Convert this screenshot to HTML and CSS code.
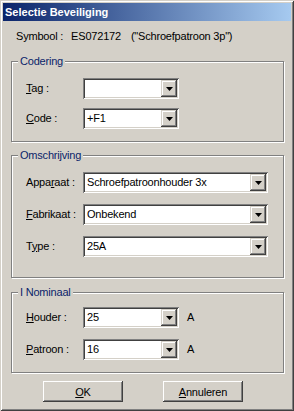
FILE: index.html
```html
<!DOCTYPE html>
<html lang="nl">
<head>
    <meta charset="UTF-8">
    <title>Selectie Beveiliging</title>
    <link rel="stylesheet" href="styles.css">
</head>
<body>
    <div class="window">
        <div class="titlebar">Selectie Beveiliging</div>
        <div class="client">
            <div class="symbol">
                <span>Symbool :</span>
                <span class="symbol-code">ES072172</span>
                <span class="symbol-desc">("Schroefpatroon 3p")</span>
            </div>

            <div class="group group-codering">
                <span class="legend">Codering</span>
                <div class="row">
                    <label><u>T</u>ag :</label>
                    <div class="combo combo-short">
                        <span class="value"></span>
                        <span class="drop"><svg width="7" height="4" viewBox="0 0 7 4"><polygon points="0,0 7,0 3.5,4" fill="#000"/></svg></span>
                    </div>
                </div>
                <div class="row">
                    <label><u>C</u>ode :</label>
                    <div class="combo combo-short">
                        <span class="value">+F1</span>
                        <span class="drop"><svg width="7" height="4" viewBox="0 0 7 4"><polygon points="0,0 7,0 3.5,4" fill="#000"/></svg></span>
                    </div>
                </div>
            </div>

            <div class="group group-omschrijving">
                <span class="legend">Omschrijving</span>
                <div class="row">
                    <label>Appa<u>r</u>aat :</label>
                    <div class="combo combo-long">
                        <span class="value">Schroefpatroonhouder 3x</span>
                        <span class="drop"><svg width="7" height="4" viewBox="0 0 7 4"><polygon points="0,0 7,0 3.5,4" fill="#000"/></svg></span>
                    </div>
                </div>
                <div class="row">
                    <label><u>F</u>abrikaat :</label>
                    <div class="combo combo-long">
                        <span class="value">Onbekend</span>
                        <span class="drop"><svg width="7" height="4" viewBox="0 0 7 4"><polygon points="0,0 7,0 3.5,4" fill="#000"/></svg></span>
                    </div>
                </div>
                <div class="row">
                    <label>T<u>y</u>pe :</label>
                    <div class="combo combo-long">
                        <span class="value">25A</span>
                        <span class="drop"><svg width="7" height="4" viewBox="0 0 7 4"><polygon points="0,0 7,0 3.5,4" fill="#000"/></svg></span>
                    </div>
                </div>
            </div>

            <div class="group group-nominaal">
                <span class="legend">I Nominaal</span>
                <div class="row">
                    <label><u>H</u>ouder :</label>
                    <div class="combo combo-short">
                        <span class="value">25</span>
                        <span class="drop"><svg width="7" height="4" viewBox="0 0 7 4"><polygon points="0,0 7,0 3.5,4" fill="#000"/></svg></span>
                    </div>
                    <span class="unit">A</span>
                </div>
                <div class="row">
                    <label><u>P</u>atroon :</label>
                    <div class="combo combo-short">
                        <span class="value">16</span>
                        <span class="drop"><svg width="7" height="4" viewBox="0 0 7 4"><polygon points="0,0 7,0 3.5,4" fill="#000"/></svg></span>
                    </div>
                    <span class="unit">A</span>
                </div>
            </div>

            <div class="buttons">
                <button type="button" class="btn"><u>O</u>K</button>
                <button type="button" class="btn"><u>A</u>nnuleren</button>
            </div>
        </div>
    </div>
</body>
</html>
```

FILE: styles.css
```css
body {
    margin: 0;
    font-family: "Liberation Sans", Arial, sans-serif;
    font-size: 11px;
    color: #000;
    background: #d4d0c8;
}

.window {
    box-sizing: border-box;
    width: 294px;
    height: 411px;
    padding: 3px;
    background: #d4d0c8;
    box-shadow: inset 1px 1px #d4d0c8, inset -1px -1px #404040, inset 2px 2px #fff, inset -2px -2px #808080;
}

.titlebar {
    height: 18px;
    line-height: 18px;
    padding-left: 2px;
    color: #fff;
    font-weight: bold;
    background: linear-gradient(to right, #0a246a, #a6caf0);
}

.client {
    display: flex;
    flex-direction: column;
    letter-spacing: -0.2px;
}

.symbol {
    margin: 9px 0 0 13px;
    line-height: 13px;
    display: flex;
}

.symbol-code {
    margin-left: 8px;
}

.symbol-desc {
    margin-left: 10px;
}

.group {
    position: relative;
    box-sizing: border-box;
    width: 273px;
    margin-left: 8px;
    border: 1px solid #808080;
    box-shadow: inset 1px 1px #fff, 1px 1px #fff;
    display: flex;
    flex-direction: column;
    gap: 11px;
}

.group-codering {
    margin-top: 18px;
    padding: 16px 0 12px 14px;
    gap: 9px;
}

.group-omschrijving {
    margin-top: 13px;
    padding: 16px 0 20px 14px;
}

.group-nominaal {
    margin-top: 14px;
    padding: 14px 0 12px 14px;
}

.legend {
    position: absolute;
    top: -7px;
    left: 6px;
    padding: 0 2px 0 2px;
    line-height: 13px;
    color: #0a246a;
    background: #d4d0c8;
}

.row {
    display: flex;
    align-items: center;
    height: 21px;
}

.row label {
    width: 57px;
    line-height: 13px;
    margin-top: -1px;
}

.combo {
    box-sizing: border-box;
    height: 21px;
    padding: 2px;
    display: flex;
    background: #fff;
    box-shadow: inset 1px 1px #808080, inset -1px -1px #fff, inset 2px 2px #404040, inset -2px -2px #d4d0c8;
}

.combo-short {
    width: 96px;
}

.combo-long {
    width: 185px;
}

.combo .value {
    flex: 1;
    padding-left: 2px;
    line-height: 17px;
    white-space: nowrap;
    overflow: hidden;
}

.combo .drop {
    width: 16px;
    height: 17px;
    display: flex;
    align-items: center;
    justify-content: center;
    background: #d4d0c8;
    box-shadow: inset -1px -1px #404040, inset 1px 1px #d4d0c8, inset -2px -2px #808080, inset 2px 2px #fff;
}

.combo .drop svg {
    display: block;
    margin-left: 1px;
}

.unit {
    margin-left: 8px;
    line-height: 13px;
}

.buttons {
    display: flex;
    gap: 40px;
    margin: 8px 0 0 40px;
}

.btn {
    width: 80px;
    height: 21px;
    padding: 0;
    border: none;
    font-family: inherit;
    font-size: 11px;
    letter-spacing: -0.2px;
    color: #000;
    background: #d4d0c8;
    box-shadow: inset -1px -1px #404040, inset 1px 1px #fff, inset -2px -2px #808080, inset 2px 2px #d4d0c8;
}
```
